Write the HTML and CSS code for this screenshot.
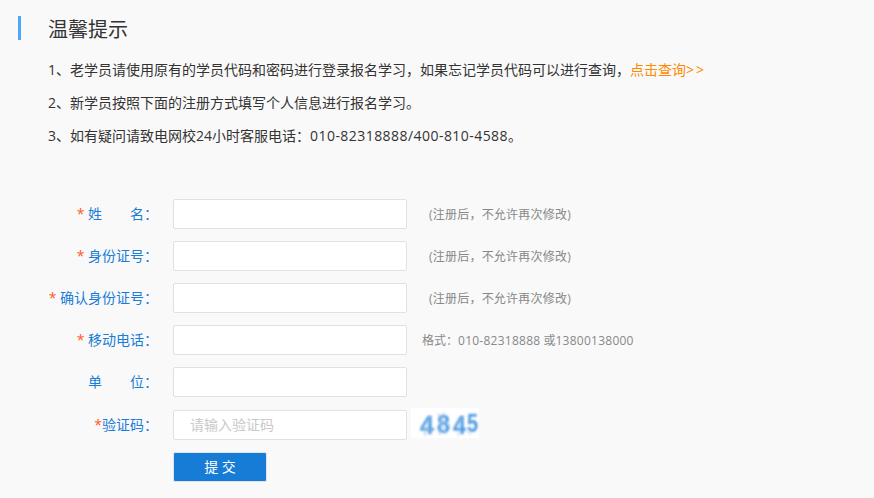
FILE: index.html
```html
<!DOCTYPE html>
<html lang="zh-CN">
<head>
<meta charset="utf-8">
<title>温馨提示</title>
<link rel="stylesheet" href="styles.css">
</head>
<body>
<section class="notice">
  <h2 class="notice-title">温馨提示</h2>
  <div class="notice-body">
    <p>1、老学员请使用原有的学员代码和密码进行登录报名学习，如果忘记学员代码可以进行查询，<a class="link" href="#">点击查询<span class="arrows">&gt;&gt;</span></a></p>
    <p>2、新学员按照下面的注册方式填写个人信息进行报名学习。</p>
    <p>3、如有疑问请致电网校24小时客服电话：<span class="num">010-82318888/400-810-4588</span>。</p>
  </div>
</section>
<form class="form">
  <div class="row">
    <label class="label"><i>*</i> <span class="wide">姓<b>名</b></span>：</label>
    <input class="input" type="text">
    <span class="hint">(注册后，不允许再次修改)</span>
  </div>
  <div class="row">
    <label class="label"><i>*</i> 身份证号：</label>
    <input class="input" type="text">
    <span class="hint">(注册后，不允许再次修改)</span>
  </div>
  <div class="row">
    <label class="label"><i>*</i> 确认身份证号：</label>
    <input class="input" type="text">
    <span class="hint">(注册后，不允许再次修改)</span>
  </div>
  <div class="row">
    <label class="label"><i>*</i> 移动电话：</label>
    <input class="input" type="text">
    <span class="hint hint-format">格式：<span class="num-sm">010-82318888</span> 或<span class="num-sm">13800138000</span></span>
  </div>
  <div class="row">
    <label class="label"><span class="wide">单<b>位</b></span>：</label>
    <input class="input" type="text">
  </div>
  <div class="row row-code">
    <label class="label"><i>*</i>验证码：</label>
    <input class="input input-code" type="text" placeholder="请输入验证码">
    <svg class="captcha" width="72" height="34" viewBox="0 0 72 34" role="img" aria-label="4845">
      <defs><filter id="soft" x="-10%" y="-10%" width="120%" height="120%"><feGaussianBlur stdDeviation="0.8"/></filter></defs>
      <rect y="1" width="68" height="30" fill="#fff"/>
      <g class="captcha-digits" filter="url(#soft)">
        <text x="9" y="27" textLength="14" lengthAdjust="spacingAndGlyphs">4</text>
        <text x="26" y="26" textLength="13" lengthAdjust="spacingAndGlyphs">8</text>
        <text x="42" y="27" textLength="13" lengthAdjust="spacingAndGlyphs">4</text>
        <text x="56" y="25" textLength="11" lengthAdjust="spacingAndGlyphs">5</text>
      </g>
      <g class="captcha-noise" filter="url(#soft)">
        <path d="M27 6l8 21M33 5l-5 23M30 13l9 5M14 29l5-21M10 21l12 2M47 29l4-20M12 25l3 3M60 27l-4-2"/>
      </g>
    </svg>
  </div>
  <div class="actions">
    <button class="submit" type="button">提 交</button>
  </div>
</form>
</body>
</html>
```
FILE: styles.css
```css
* { box-sizing: border-box; }
html, body { margin: 0; height: 100%; }
body {
  width: 874px;
  height: 498px;
  overflow: hidden;
  background: #f9f9f9;
  color: #333;
  font-family: "Open Sans", "Noto Sans CJK SC", sans-serif;
  font-size: 14px;
  padding-top: 16px;
}
.notice { padding-left: 18px; }
.notice-title {
  margin: 0;
  height: 24px;
  padding-left: 27px;
  border-left: 3px solid #4ea6fb;
  font-size: 20px;
  font-weight: 400;
  line-height: 28px;
  color: #333;
}
.notice-body { padding: 13px 0 0 30px; }
.notice-body p { margin: 0; height: 33px; line-height: 33px; white-space: nowrap; }
.num { letter-spacing: .45px; }
.link { color: #ff8a00; text-decoration: none; }
.arrows { letter-spacing: 2px; }
.form { margin-top: 47px; }
.row { display: flex; align-items: center; height: 30px; margin-bottom: 12px; }
.row-code { margin-top: 13px; margin-bottom: 12px; }
.label { flex: none; width: 158px; padding-bottom: 2px; text-align: right; color: #1a7dd7; white-space: nowrap; margin-right: 15px; }
.label i { font-style: normal; color: #ff5a1f; }
.wide { display: inline-flex; justify-content: space-between; width: 56px; font-weight: 400; vertical-align: top; }
.wide b { font-weight: 400; margin-left: 14px; }
.input {
  flex: none;
  width: 234px;
  height: 30px;
  padding: 0 16px;
  background: #fff;
  border: 1px solid #e1e1e1;
  border-radius: 2px;
  font: inherit;
  outline: none;
}
.input-code { padding-bottom: 2px; }
.input::placeholder { color: #c9c9c9; opacity: 1; }
.hint { margin-left: 22px; font-size: 12px; color: #888; white-space: nowrap; letter-spacing: .22px; }
.hint-format { margin-left: 15px; letter-spacing: 0; }
.num-sm { letter-spacing: .25px; }
.captcha { flex: none; margin: 0 0 2px 4px; display: block; }
.captcha-digits text {
  fill: #4a98e0;
  stroke: #8cbfee;
  stroke-width: .6px;
  font-family: "Liberation Sans", sans-serif;
  font-weight: 700;
  font-size: 26px;
}
.captcha-noise path { fill: none; stroke: #a4c9ec; stroke-width: 1px; }
.actions { padding-left: 173px; }
.submit {
  display: block;
  width: 94px;
  height: 30px;
  padding: 0 0 2px;
  background: #167cd6;
  border: 1px solid #e1e4e8;
  border-radius: 2px;
  color: #fff;
  font: inherit;
}
```
